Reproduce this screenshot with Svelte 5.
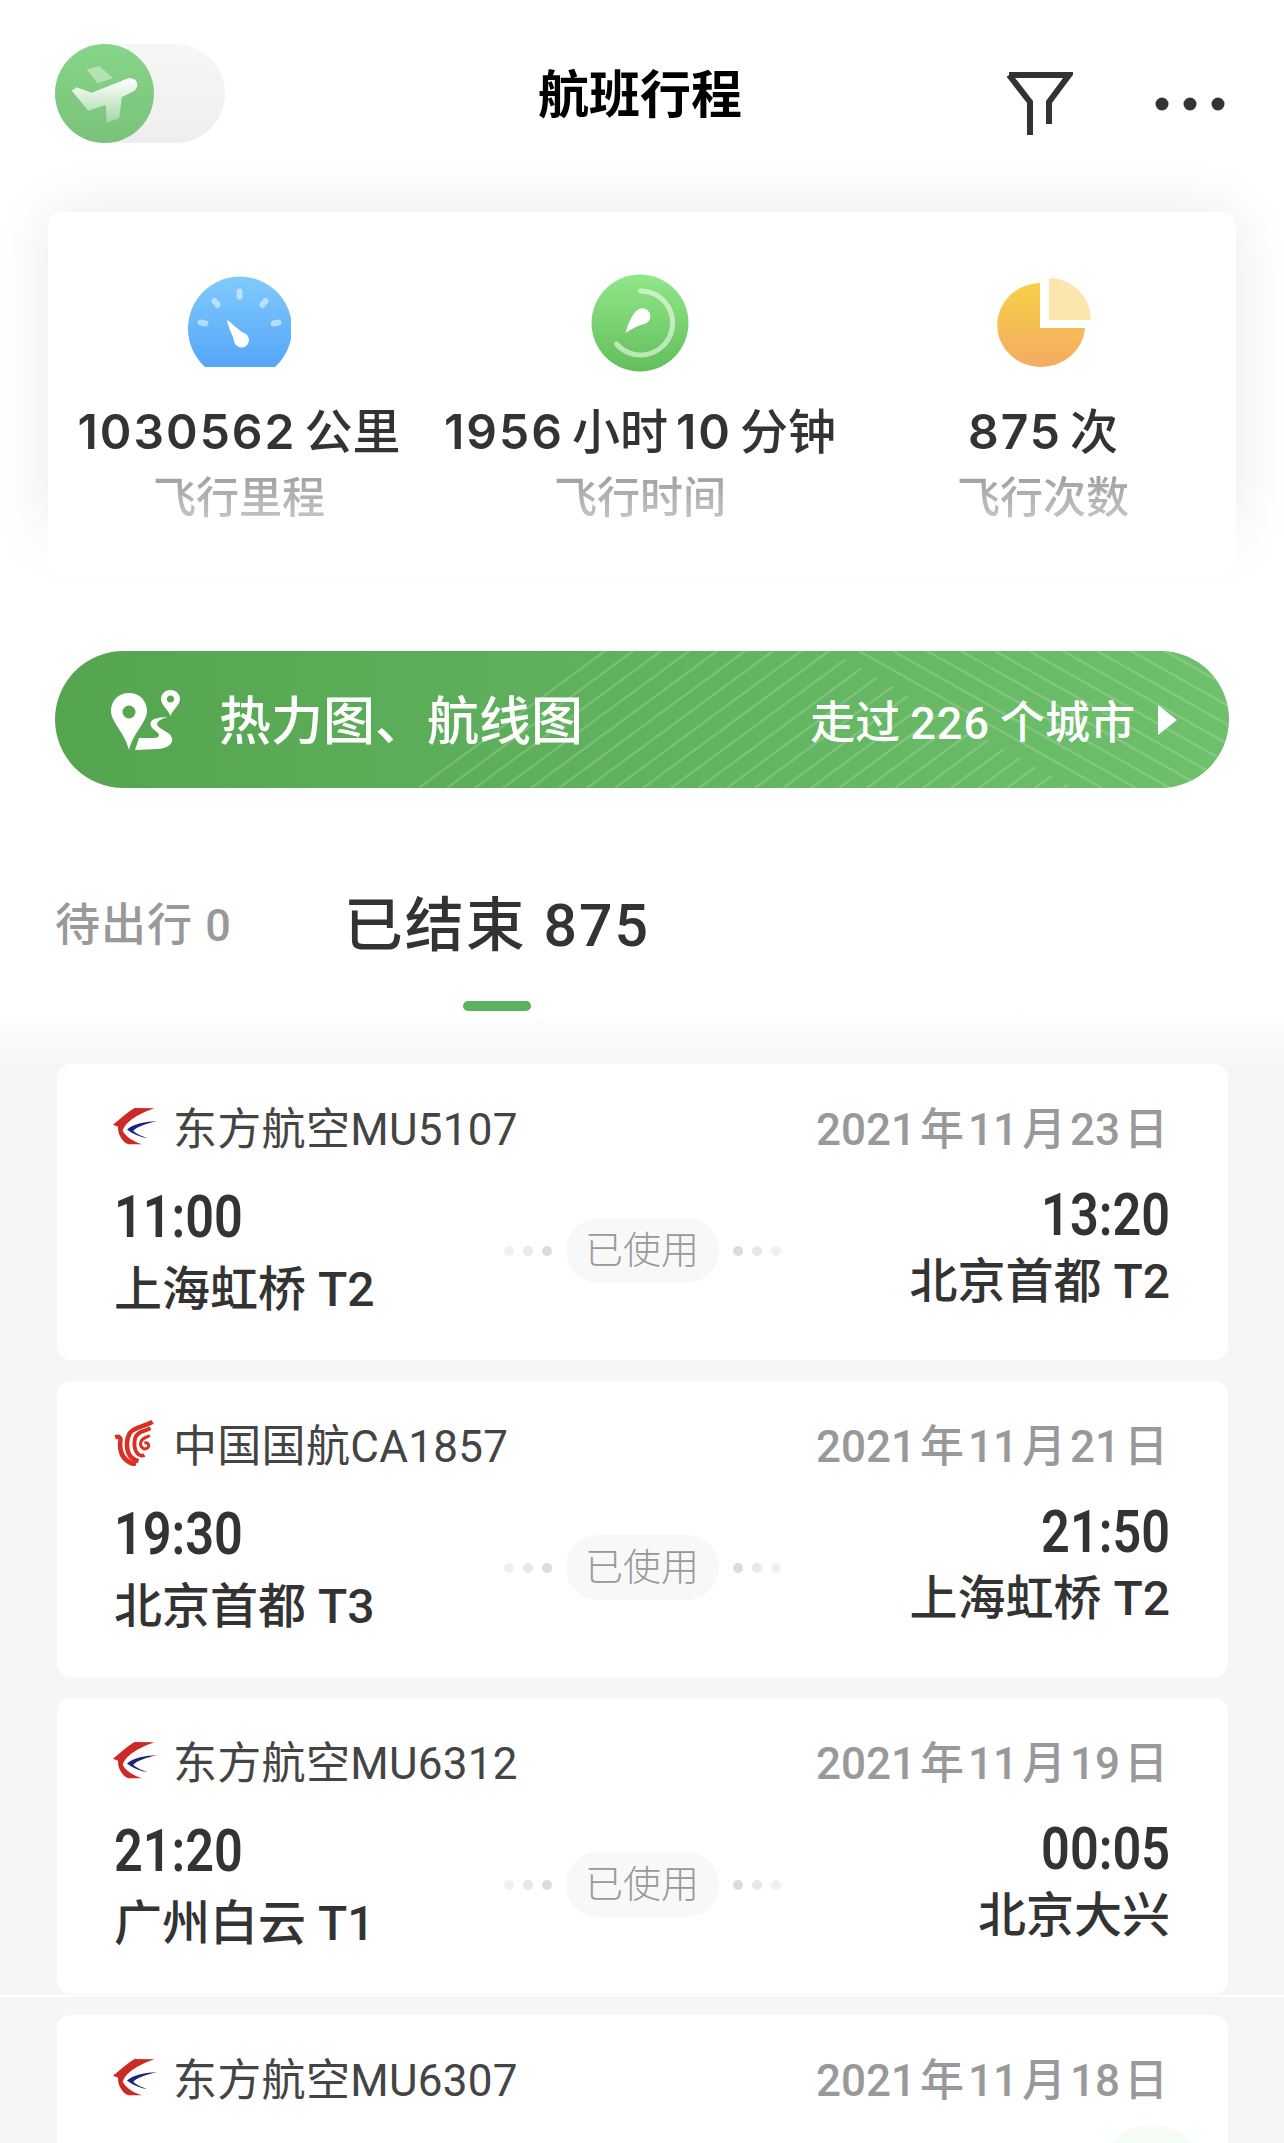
<script>
	const stats = [
		{ value: '1030562公里', label: '飞行里程', icon: 'gauge' },
		{ value: '1956小时10分钟', label: '飞行时间', icon: 'clock' },
		{ value: '875次', label: '飞行次数', icon: 'pie' }
	];

	const flights = [
		{ logo: 'mu', name: '东方航空MU5107', date: '2021年11月23日', dep: '11:00', from: '上海虹桥 T2', arr: '13:20', to: '北京首都 T2' },
		{ logo: 'ca', name: '中国国航CA1857', date: '2021年11月21日', dep: '19:30', from: '北京首都 T3', arr: '21:50', to: '上海虹桥 T2' },
		{ logo: 'mu', name: '东方航空MU6312', date: '2021年11月19日', dep: '21:20', from: '广州白云 T1', arr: '00:05', to: '北京大兴' },
		{ logo: 'mu', name: '东方航空MU6307', date: '2021年11月18日' }
	];

	const ticks = [
		[51.5, 21, 0],
		[28, 30, -38],
		[76, 30, 38],
		[15, 50, -80],
		[88, 50, 80]
	];

	const backLines = Array.from({ length: 26 }, (_, i) => 364 + i * 28);
	const foreLines = Array.from({ length: 12 }, (_, i) => 804 + i * 34);

	// digits and CJK sit apart by a small gap on iOS, so split them up
	function parts(text) {
		return text.match(/[\x00-\x7f]+|[^\x00-\x7f]+/g);
	}
</script>

{#snippet spaced(text)}
	<span class="spaced">
		{#each parts(text) as part}
			<span class:num={/^[\x00-\x7f]/.test(part)}>{part}</span>
		{/each}
	</span>
{/snippet}

{#snippet logo(kind)}
	{#if kind === 'mu'}
		<svg class="logo" viewBox="205 180 125 112" preserveAspectRatio="none">
			<path fill="#cc2a26" d="M320 184 L265 183 C245 195 225 215 205 232 L219 238 C218 258 228 280 247 290 L286 290 C262 282 242 270 232 250 C240 222 280 198 320 184Z" />
			<path fill="#1c2183" d="M328 222 C295 222 262 230 244 246 C258 258 280 268 301 272 C285 266 268 258 261 250 C272 238 300 228 328 222Z" />
		</svg>
	{:else}
		<svg class="logo logo-ca" viewBox="25 18 122 142" fill="none" stroke="#d83024">
			<path stroke-width="14" d="M28 72 C38 68 46 70 44 82 C40 115 50 145 92 156" />
			<path stroke-width="14" d="M143 23 C120 40 85 38 72 60 C62 78 62 105 70 122 C76 136 88 142 100 145" />
			<path stroke-width="12" d="M137 43 C115 55 98 52 90 72 C84 92 88 112 96 120 C102 128 112 130 118 126" />
			<path stroke-width="9" d="M135 66 C122 72 108 74 106 90 C106 104 118 112 128 104 C136 96 128 84 118 90" />
		</svg>
	{/if}
{/snippet}

<div class="page">
	<header class="top">
		<div class="toggle">
			<div class="knob">
				<svg viewBox="0 0 99 99" width="99" height="99">
					<defs>
						<linearGradient id="planeFill" x1="0.5" y1="0" x2="0.5" y2="1">
							<stop offset="0" stop-color="#fff" />
							<stop offset="1" stop-color="#fff" stop-opacity="0.3" />
						</linearGradient>
					</defs>
					<path fill="#fff" opacity="0.4" d="M31.7 25.3 L44.3 22 L58.3 34.3 L42.3 39.3Z" />
					<path fill="url(#planeFill)" d="M16.7 46.7 L21.7 43.3 L36.7 48.7 L73.3 34.3 Q82.3 33.5 82.3 41 Q82.3 45 78 47.5 L66.7 53.3 L64.3 74.3 L51.7 78.7 L50.7 61 L33.3 66.7Z" />
				</svg>
			</div>
		</div>
		<h1>航班行程</h1>
		<div class="actions">
			<svg class="filter" viewBox="0 0 68 66" width="68" height="66" fill="none" stroke="#333" stroke-width="6">
				<path d="M4 5 H64 L44 32 V54 M4 5 L25 32 V65" />
			</svg>
			<svg class="more" viewBox="0 0 70 14" width="70" height="14" fill="#333">
				<circle cx="7" cy="7" r="6.5" />
				<circle cx="35" cy="7" r="6.5" />
				<circle cx="63" cy="7" r="6.5" />
			</svg>
		</div>
	</header>

	<section class="stats-wrap">
		<div class="stats">
			{#each stats as stat}
				<div class="stat">
					<div class="stat-icon">
						{#if stat.icon === 'gauge'}
							<svg viewBox="-1 0 104 100" width="104" height="100">
								<defs>
									<linearGradient id="gaugeFill" x1="0.5" y1="0" x2="0.5" y2="1">
										<stop offset="0" stop-color="#81cbfb" />
										<stop offset="1" stop-color="#55a5f8" />
									</linearGradient>
								</defs>
								<path fill="url(#gaugeFill)" d="M17 94 A52 52 0 1 1 87 94Z" />
								{#each ticks as [x, y, angle]}
									<rect x={x - 3} y={y - 5.5} width="6" height="11" rx="3" fill="#fff" opacity="0.5" transform="rotate({angle} {x} {y})" />
								{/each}
								<path fill="#fff" d="M39 47 C43 49 50 57 56 60 A7.5 7.5 0 1 1 46 68 C45 62 40 55 39 47Z" />
							</svg>
						{:else if stat.icon === 'clock'}
							<svg viewBox="-1.5 0 100 100" width="100" height="100">
								<defs>
									<linearGradient id="clockFill" x1="0.5" y1="0" x2="0.5" y2="1">
										<stop offset="0" stop-color="#92e788" />
										<stop offset="1" stop-color="#62be5c" />
									</linearGradient>
								</defs>
								<circle cx="48.5" cy="50" r="48.5" fill="url(#clockFill)" />
								<path fill="none" stroke="#fff" stroke-opacity="0.55" stroke-width="5" stroke-linecap="round" d="M49 18 A32 32 0 1 1 25 71" />
								<path fill="#fff" d="M34 60 C36 52 40 42 46 37 A8 8 0 1 1 53 51 C47 52 40 56 34 60Z" />
							</svg>
						{:else}
							<svg viewBox="0 0 100 100" width="100" height="100">
								<defs>
									<linearGradient id="pieFill" x1="0.5" y1="0" x2="0.5" y2="1">
										<stop offset="0" stop-color="#f7d147" />
										<stop offset="1" stop-color="#f4ab62" />
									</linearGradient>
								</defs>
								<path fill="url(#pieFill)" d="M47 10 V55 H92 A44 42 0 1 1 47 10Z" />
								<path fill="#fbe7ae" d="M56 5 V47 H98 A42 42 0 0 0 56 5Z" />
							</svg>
						{/if}
					</div>
					<div class="stat-value">{@render spaced(stat.value)}</div>
					<div class="stat-label">{stat.label}</div>
				</div>
			{/each}
		</div>
	</section>

	<div class="banner">
		<svg class="stripes" viewBox="0 0 1174 137" width="1174" height="137" fill="none" stroke="#fff" stroke-opacity="0.16" stroke-width="2.5">
			<defs>
				<clipPath id="backClip">
					<polygon points="0,0 775,0 1018,137 0,137" />
				</clipPath>
			</defs>
			<g clip-path="url(#backClip)">
				{#each backLines as x}
					<line x1={x} y1="137" x2={x + 186} y2="0" />
				{/each}
			</g>
			{#each foreLines as x}
				<line x1={x} y1="0" x2={x + 243} y2="137" />
			{/each}
		</svg>
		<div class="banner-left">
			<svg viewBox="0 0 80 70" width="80" height="70" fill="#fff" fill-rule="evenodd">
				<path d="M24 8 C13 8 6 16 6 26 C6 37 20 48 24 65 C28 48 42 37 42 26 C42 16 35 8 24 8Z M24 20.5 A6.5 6.5 0 1 0 24 33.5 A6.5 6.5 0 1 0 24 20.5Z" />
				<path d="M65.5 5 C60 5 56 9 56 14 C56 20 63 24 65.5 31 C68 24 75 20 75 14 C75 9 71 5 65.5 5Z M65.5 10.5 A3.5 3.5 0 1 0 65.5 17.5 A3.5 3.5 0 1 0 65.5 10.5Z" />
				<path d="M30 65 L34 53 H50 Q56 52 53 48 L47 43 Q43 37 49 34 Q55 32 63 32 Q52 35 52 39 Q52 42 60 46 Q69 51 67 57 Q63 64 52 64Z" />
			</svg>
			<span>热力图、航线图</span>
		</div>
		<div class="banner-right">
			{@render spaced('走过226个城市')}
			<i class="arrow"></i>
		</div>
	</div>

	<nav class="tabs">
		<div class="tab">待出行 0</div>
		<div class="tab active">已结束 875</div>
	</nav>

	<div class="list">
		{#each flights as flight}
			<article class="card">
				<div class="card-head">
					<div class="airline">
						{@render logo(flight.logo)}
						<span>{flight.name}</span>
					</div>
					<div class="date">{@render spaced(flight.date)}</div>
				</div>
				{#if flight.dep}
					<div class="route">
						<div class="side">
							<div class="time">{flight.dep}</div>
							<div class="place">{flight.from}</div>
						</div>
						<div class="status">
							<div class="dots">
								<i></i><i></i><i></i>
							</div>
							<span class="pill">已使用</span>
							<div class="dots flip">
								<i></i><i></i><i></i>
							</div>
						</div>
						<div class="side end">
							<div class="time">{flight.arr}</div>
							<div class="place">{flight.to}</div>
						</div>
					</div>
				{/if}
			</article>
		{/each}
	</div>

	<div class="seam"></div>
	<div class="glow"></div>
</div>

<style>
	:global(body) {
		margin: 0;
	}

	.page {
		position: relative;
		width: 1284px;
		height: 2143px;
		overflow: hidden;
		background: linear-gradient(#fff 1010px, #f6f6f6 1064px);
		font-family: Roboto, 'Noto Sans CJK SC', sans-serif;
		color: #333;
	}

	.top {
		display: grid;
		grid-template-columns: 1fr auto 1fr;
		align-items: center;
		padding: 44px 59px 0 55px;
		height: 99px;
	}

	.toggle {
		width: 170px;
		height: 99px;
		border-radius: 50px;
		background: linear-gradient(#f7f7f7, #eeeeee);
	}

	.knob {
		width: 99px;
		height: 99px;
		border-radius: 50%;
		background: linear-gradient(#87d588, #79c27a);
	}

	.knob svg {
		display: block;
	}

	h1 {
		margin: 0 0 6px;
		font-size: 51px;
		line-height: 72px;
		font-weight: 700;
		color: #000;
		font-family: 'Noto Sans CJK SC', sans-serif;
	}

	.actions {
		display: flex;
		justify-content: flex-end;
		align-items: flex-start;
		gap: 82px;
		margin-top: 16px;
	}

	.filter {
		display: block;
		margin-top: 3px;
	}

	.more {
		display: block;
		margin-top: 30px;
	}

	.stats-wrap {
		margin-top: 7px;
		padding: 62px 48px 15px;
		overflow: hidden;
		-webkit-mask-image: linear-gradient(#000 74%, transparent 100%);
		mask-image: linear-gradient(#000 74%, transparent 100%);
	}

	.stats {
		display: grid;
		grid-template-columns: 382px 420px 386px;
		height: 363px;
		padding-top: 61px;
		box-sizing: border-box;
		background: #fff;
		border-radius: 14px;
		box-shadow: 0 0 60px rgba(0, 0, 0, 0.09);
	}

	.stat {
		text-align: center;
	}

	.stat-icon {
		height: 100px;
		margin-bottom: 29px;
	}

	.stat-icon svg {
		display: block;
		margin: 0 auto;
	}

	.stat-value {
		font-family: Inter, 'Noto Sans CJK SC', sans-serif;
		font-size: 48px;
		line-height: 60px;
		font-weight: 500;
		white-space: nowrap;
		--gap: 8px;
	}

	.stat-value :global(.num) {
		font-weight: 600;
		letter-spacing: 2px;
	}

	.stat-label {
		margin-top: 11px;
		font-size: 43px;
		line-height: 50px;
		font-weight: 500;
		color: #a0a0a0;
	}

	.spaced {
		display: inline-flex;
		align-items: baseline;
		gap: var(--gap, 4px);
		white-space: nowrap;
	}

	.banner {
		position: relative;
		display: flex;
		align-items: center;
		justify-content: space-between;
		box-sizing: border-box;
		width: 1174px;
		height: 137px;
		margin: 61px 0 0 55px;
		padding: 0 52px 0 50px;
		border-radius: 69px;
		overflow: hidden;
		background: linear-gradient(90deg, #54a450, #6ec06c);
		color: #fff;
	}

	.stripes {
		position: absolute;
		left: 0;
		top: 0;
	}

	.banner-left,
	.banner-right {
		position: relative;
		display: flex;
		align-items: center;
	}

	.banner-left svg {
		display: block;
		margin-right: 34px;
	}

	.banner-left span {
		margin-bottom: 4px;
		font-size: 52px;
		font-weight: 500;
		font-family: 'Noto Sans CJK SC', sans-serif;
	}

	.banner-right {
		font-size: 45px;
		font-weight: 500;
		--gap: 10px;
	}

	.banner-right :global(.num) {
		letter-spacing: 1px;
	}

	.arrow {
		width: 0;
		height: 0;
		margin-left: 23px;
		border-left: 19px solid #fff;
		border-top: 15px solid transparent;
		border-bottom: 15px solid transparent;
	}

	.tabs {
		display: flex;
		align-items: center;
		gap: 112px;
		margin: 100px 0 0 55px;
		height: 123px;
	}

	.tab {
		position: relative;
		height: 123px;
		line-height: 76px;
		font-size: 45px;
		font-weight: 500;
		letter-spacing: 1px;
		color: #999;
		white-space: nowrap;
	}

	.tab.active {
		font-size: 59px;
		letter-spacing: 2px;
		color: #333;
	}

	.tab.active::after {
		content: '';
		position: absolute;
		left: 50%;
		bottom: 0;
		width: 68px;
		height: 10px;
		margin-left: -34px;
		border-radius: 5px;
		background: #5cb25c;
	}

	.list {
		display: flex;
		flex-direction: column;
		gap: 21px;
		margin: 53px 56px 0 57px;
	}

	.card {
		box-sizing: border-box;
		height: 296px;
		padding: 32px 58px 0 57px;
		background: #fff;
		border-radius: 14px;
		flex: none;
	}

	.card-head {
		display: flex;
		justify-content: space-between;
		align-items: center;
		height: 60px;
	}

	.airline {
		display: flex;
		align-items: center;
		font-size: 44px;
		letter-spacing: 0.3px;
		color: #444;
	}

	.logo {
		display: block;
		width: 45px;
		height: 38px;
		margin: 0 15px 0 -1px;
	}

	.logo-ca {
		width: 40px;
		height: 46px;
		margin: 0 19px 0 0;
	}

	.date {
		padding-right: 2px;
		font-size: 44px;
		font-weight: 500;
		color: #999;
	}

	.route {
		display: flex;
		justify-content: space-between;
		align-items: flex-start;
		margin-top: 25px;
	}

	.side {
		width: 320px;
		white-space: nowrap;
	}

	.side.end {
		margin-top: -2px;
		text-align: right;
	}

	.time {
		font-size: 60px;
		line-height: 72px;
		font-weight: 600;
		transform: scaleX(0.84);
		transform-origin: left center;
	}

	.side.end .time {
		transform-origin: right center;
	}

	.place {
		font-size: 48px;
		line-height: 73px;
		font-weight: 500;
	}

	.side.end .place {
		line-height: 62px;
	}

	.status {
		display: flex;
		align-items: center;
		gap: 14px;
		margin-top: 37px;
	}

	.pill {
		width: 153px;
		height: 65px;
		line-height: 65px;
		text-align: center;
		font-size: 38px;
		font-weight: 300;
		color: #999;
		background: #f8f8f8;
		border-radius: 33px;
	}

	.dots {
		display: flex;
		gap: 9px;
	}

	.dots.flip {
		flex-direction: row-reverse;
	}

	.dots i {
		width: 10px;
		height: 10px;
		border-radius: 50%;
		background: #f0f0f0;
	}

	.dots i:nth-child(2) {
		background: #e8e8e8;
	}

	.dots i:nth-child(3) {
		background: #dcdcdc;
	}

	.seam {
		position: absolute;
		left: 0;
		right: 0;
		top: 1995px;
		height: 1.5px;
		background: #fff;
	}

	.glow {
		position: absolute;
		left: 1097px;
		top: 2125px;
		width: 110px;
		height: 110px;
		border-radius: 50%;
		background: radial-gradient(rgba(120, 200, 120, 0.1), rgba(120, 200, 120, 0.07) 70%, transparent);
	}
</style>
